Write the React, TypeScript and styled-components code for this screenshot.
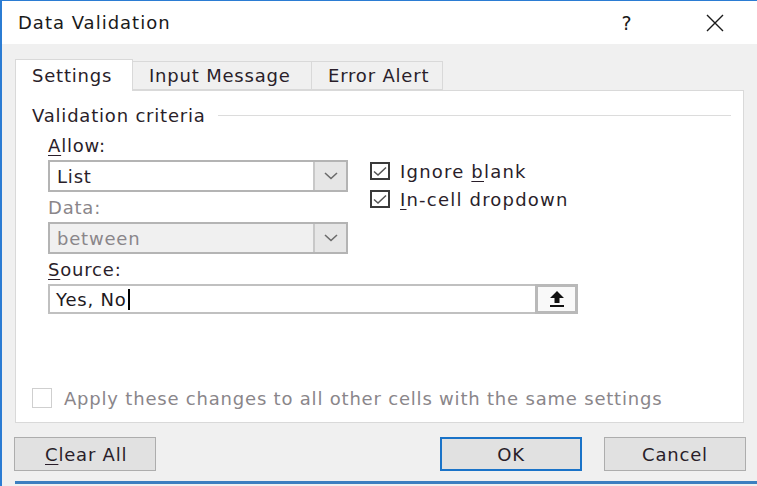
import React from "react";
import styled, { createGlobalStyle } from "styled-components";

const GlobalStyle = createGlobalStyle`
  html, body {
    margin: 0;
    padding: 0;
    background: #f0f0f0;
  }
  body {
    font-family: "DejaVu Sans", "Noto Sans", sans-serif;
    font-size: 18px;
    letter-spacing: 0.8px;
    color: #2a1e2a;
  }
`;

const Window = styled.div`
  width: 757px;
  height: 486px;
  box-sizing: border-box;
  border-left: 2px solid #2b7cd3;
  border-top: 1px solid #2b7cd3;
  display: flex;
  flex-direction: column;
  background: #f0f0f0;
  overflow: hidden;
`;

const TitleBar = styled.div`
  height: 43px;
  background: #ffffff;
  display: flex;
  align-items: center;
  padding: 0 22px 0 16px;
  gap: 48px;
  flex-shrink: 0;
`;

const Title = styled.div`
  color: #1a1a1a;
  flex: 1;
  letter-spacing: 1px;
`;

const TitleButton = styled.div`
  width: 40px;
  height: 43px;
  display: flex;
  align-items: center;
  justify-content: center;
  font-size: 19px;
  color: #1a1a1a;
`;

const Body = styled.div`
  flex: 1;
  padding: 15px 0 0 13px;
  display: flex;
  flex-direction: column;
`;

const TabRow = styled.div`
  display: flex;
  align-items: flex-end;
  height: 31px;
  position: relative;
  z-index: 1;
`;

const Tab = styled.div<{ $active?: boolean; $w: number }>`
  width: ${(p) => p.$w}px;
  box-sizing: border-box;
  height: ${(p) => (p.$active ? 32 : 29)}px;
  margin-bottom: ${(p) => (p.$active ? -1 : 0)}px;
  margin-left: ${(p) => (p.$active ? 0 : -1)}px;
  background: ${(p) => (p.$active ? "#ffffff" : "#f0f0f0")};
  border: 1px solid #d9d9d9;
  border-bottom: ${(p) => (p.$active ? "none" : "1px solid #d9d9d9")};
  display: flex;
  align-items: center;
  padding-left: 16px;
`;

const Panel = styled.div`
  width: 729px;
  height: 333px;
  box-sizing: border-box;
  background: #ffffff;
  border: 1px solid #d9d9d9;
  padding: 13px 0 0 16px;
  display: flex;
  flex-direction: column;
`;

const GroupHeader = styled.div`
  display: flex;
  align-items: center;
  gap: 12px;
  height: 22px;
  padding-right: 12px;
`;

const GroupRule = styled.div`
  flex: 1;
  height: 1px;
  background: #dcdcdc;
`;

const Criteria = styled.div`
  display: flex;
  padding-left: 16px;
  margin-top: 8px;
  gap: 22px;
`;

const LeftCol = styled.div`
  display: flex;
  flex-direction: column;
  width: 300px;
`;

const Label = styled.div<{ $disabled?: boolean }>`
  height: 26px;
  line-height: 24px;
  color: ${(p) => (p.$disabled ? "#8a868a" : "#2a1e2a")};
`;

const Key = styled.span`
  text-decoration: underline;
  text-underline-offset: 3px;
`;

const SelectBox = styled.div<{ $disabled?: boolean }>`
  height: 32px;
  box-sizing: border-box;
  border: 2px solid #b4b4b4;
  background: ${(p) => (p.$disabled ? "#f0f0f0" : "#ffffff")};
  display: flex;
  align-items: stretch;
  margin-bottom: 4px;
`;

const SelectText = styled.div<{ $disabled?: boolean }>`
  flex: 1;
  display: flex;
  align-items: center;
  padding-left: 7px;
  color: ${(p) => (p.$disabled ? "#8a868a" : "#2a1e2a")};
`;

const DropButton = styled.div`
  width: 31px;
  background: #e6e6e6;
  border-left: 2px solid #c8c8c8;
  display: flex;
  align-items: center;
  justify-content: center;
`;

const RightCol = styled.div`
  display: flex;
  flex-direction: column;
  padding-top: 28px;
  gap: 10px;
`;

const CheckRow = styled.div<{ $disabled?: boolean }>`
  display: flex;
  align-items: center;
  height: 18px;
  gap: 10px;
  color: ${(p) => (p.$disabled ? "#8a868a" : "#2a1e2a")};
`;

const CheckText = styled.span`
  letter-spacing: 1.2px;
`;

const Box = styled.div<{ $disabled?: boolean }>`
  width: 20px;
  height: ${(p) => (p.$disabled ? 20 : 18)}px;
  box-sizing: border-box;
  border: ${(p) => (p.$disabled ? "1px solid #cfcfcf" : "2px solid #3a3a3a")};
  background: #ffffff;
  display: flex;
  align-items: center;
  justify-content: center;
`;

const SourceBlock = styled.div`
  padding-left: 16px;
  width: 530px;
`;

const SourceInput = styled.div`
  height: 30px;
  box-sizing: border-box;
  border: 2px solid #c0c0c0;
  display: flex;
  align-items: stretch;
`;

const SourceText = styled.div`
  flex: 1;
  display: flex;
  align-items: center;
  padding-left: 6px;
  color: #1e1a1e;
`;

const Caret = styled.span`
  display: inline-block;
  width: 2px;
  height: 21px;
  background: #000;
  margin-left: 1px;
`;

const CollapseButton = styled.div`
  width: 43px;
  box-sizing: border-box;
  border: 3px solid #b9b9b9;
  margin: -2px -2px -2px 0;
  background: #f9f9f9;
  display: flex;
  align-items: center;
  justify-content: center;
`;

const ApplyRow = styled(CheckRow)`
  margin-top: auto;
  margin-bottom: 15px;
  gap: 12px;
`;

const Footer = styled.div`
  display: flex;
  align-items: center;
  margin: 14px 0 0 -1px;
  width: 732px;
`;

const Button = styled.div<{ $default?: boolean; $left?: boolean }>`
  width: 142px;
  height: 34px;
  box-sizing: border-box;
  background: #e1e1e1;
  border: ${(p) => (p.$default ? "2px solid #1a73c8" : "1px solid #adadad")};
  display: flex;
  align-items: center;
  justify-content: ${(p) => (p.$left ? "flex-start" : "center")};
  padding-left: ${(p) => (p.$left ? 30 : 0)}px;
  margin-left: ${(p) => (p.$left ? 0 : 22)}px;
`;

const Spacer = styled.div`
  flex: 1;
`;

const BottomEdge = styled.div`
  height: 3px;
  background: #3c7fc0;
  margin-top: auto;
  margin-bottom: 2px;
`;

function Chevron() {
  return (
    <svg width="14" height="8" viewBox="0 0 14 8">
      <path d="M1 1 L7 6.5 L13 1" fill="none" stroke="#6b6b6b" strokeWidth="1.6" />
    </svg>
  );
}

function Tick() {
  return (
    <svg width="14" height="11" viewBox="0 0 14 11">
      <path d="M1 5.5 L5 9 L13 1.5" fill="none" stroke="#555" strokeWidth="1.5" />
    </svg>
  );
}

function UploadArrow() {
  return (
    <svg width="18" height="18" viewBox="0 0 18 18">
      <path d="M9 1 L16 8 L11.5 8 L11.5 13 L6.5 13 L6.5 8 L2 8 Z" fill="#111" />
      <rect x="2" y="15" width="14" height="2" fill="#111" />
    </svg>
  );
}

function CloseIcon() {
  return (
    <svg width="20" height="20" viewBox="0 0 20 20">
      <path d="M2 2 L18 18 M18 2 L2 18" stroke="#1a1a1a" strokeWidth="1.4" />
    </svg>
  );
}

export default function App() {
  return (
    <>
      <GlobalStyle />
      <Window>
        <TitleBar>
          <Title>Data Validation</Title>
          <TitleButton>?</TitleButton>
          <TitleButton>
            <CloseIcon />
          </TitleButton>
        </TitleBar>
        <Body>
          <TabRow>
            <Tab $active $w={118}>Settings</Tab>
            <Tab $w={180}>Input Message</Tab>
            <Tab $w={132}>Error Alert</Tab>
          </TabRow>
          <Panel>
            <GroupHeader>
              Validation criteria
              <GroupRule />
            </GroupHeader>
            <Criteria>
              <LeftCol>
                <Label>
                  <Key>A</Key>llow:
                </Label>
                <SelectBox>
                  <SelectText>List</SelectText>
                  <DropButton>
                    <Chevron />
                  </DropButton>
                </SelectBox>
                <Label $disabled>Data:</Label>
                <SelectBox $disabled>
                  <SelectText $disabled>between</SelectText>
                  <DropButton>
                    <Chevron />
                  </DropButton>
                </SelectBox>
              </LeftCol>
              <RightCol>
                <CheckRow>
                  <Box>
                    <Tick />
                  </Box>
                  <CheckText>
                    Ignore <Key>b</Key>lank
                  </CheckText>
                </CheckRow>
                <CheckRow>
                  <Box>
                    <Tick />
                  </Box>
                  <CheckText>
                    <Key>I</Key>n-cell dropdown
                  </CheckText>
                </CheckRow>
              </RightCol>
            </Criteria>
            <SourceBlock>
              <Label>
                <Key>S</Key>ource:
              </Label>
              <SourceInput>
                <SourceText>
                  Yes, No
                  <Caret />
                </SourceText>
                <CollapseButton>
                  <UploadArrow />
                </CollapseButton>
              </SourceInput>
            </SourceBlock>
            <ApplyRow $disabled>
              <Box $disabled />
              <span>Apply these changes to all other cells with the same settings</span>
            </ApplyRow>
          </Panel>
          <Footer>
            <Button $left>
              <span>
                <Key>C</Key>lear All
              </span>
            </Button>
            <Spacer />
            <Button $default>OK</Button>
            <Button>Cancel</Button>
          </Footer>
          <BottomEdge />
        </Body>
      </Window>
    </>
  );
}
